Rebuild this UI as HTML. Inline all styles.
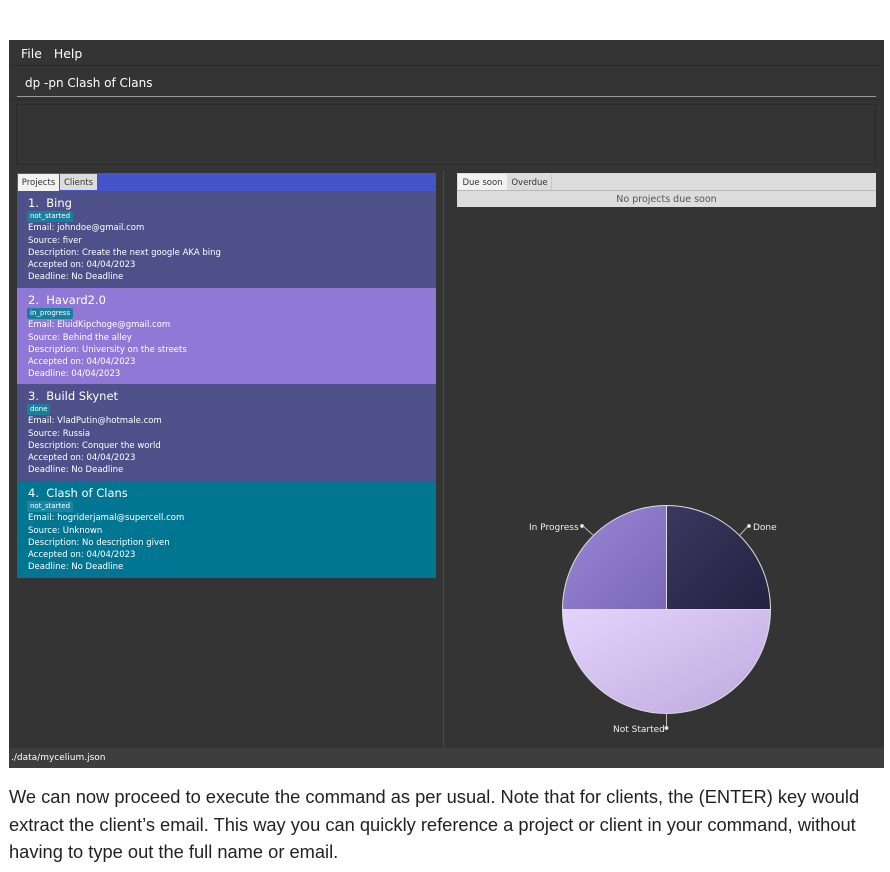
<!DOCTYPE html>
<html><head><meta charset="utf-8"><style>
*{margin:0;padding:0;box-sizing:border-box}
body{width:890px;height:872px;background:#fff;position:relative;overflow:hidden;font-family:"DejaVu Sans","Liberation Sans",sans-serif}
.a{position:absolute}
.app{left:9px;top:40px;width:875px;height:728px;background:#343434}
.card{position:absolute;left:17px;width:419px;color:#fff;font-size:8.5px;line-height:12.3px;padding:5px 0 0 11px}
.card .t{font-size:11.5px;line-height:14px}
.tag{display:inline-block;background:#1a7f9c;font-size:7px;line-height:11px;padding:0 3px;border-radius:2px;margin:1px 0 0 -1px}
p.txt{position:absolute;left:9px;top:783px;width:872px;font-family:"Liberation Sans",sans-serif;font-size:18.3px;line-height:27.5px;color:#222}
</style></head><body>
<div class="a app"></div>
<div class="a" style="left:9px;top:65px;width:875px;height:1px;background:#2a2a2a"></div>
<div class="a" style="left:21px;top:46px;color:#fff;font-size:12.5px">File&nbsp;&nbsp;&nbsp;Help</div>
<div class="a" style="left:25px;top:76px;color:#fff;font-size:12px">dp -pn Clash of Clans</div>
<div class="a" style="left:17px;top:96px;width:859px;height:1px;background:#9a9a9a"></div>
<div class="a" style="left:9px;top:99px;width:875px;height:1px;background:#2a2a2a"></div>
<div class="a" style="left:16px;top:104px;width:860px;height:61px;border:1px solid #2a2a2a;background:#343434"></div>
<div class="a" style="left:443px;top:170px;width:1px;height:578px;background:#4a4a4a"></div>
<div class="a" style="left:17px;top:173px;width:419px;height:18px;background:#4355c9"></div>
<div class="a" style="left:18px;top:174px;width:41px;height:17px;background:#f2f2f2;font-size:8.5px;line-height:18px;text-align:center;color:#333">Projects</div>
<div class="a" style="left:60px;top:174px;width:37px;height:16px;background:#dcdcdc;font-size:8.5px;line-height:18px;text-align:center;color:#333">Clients</div>
<div class="card" style="top:191px;height:97px;background:#4e5089"><div class="t">1.&nbsp; Bing</div><span class="tag">not_started</span><br>Email: johndoe@gmail.com<br>Source: fiver<br>Description: Create the next google AKA bing<br>Accepted on: 04/04/2023<br>Deadline: No Deadline</div>
<div class="card" style="top:288px;height:96px;background:#9079d6"><div class="t">2.&nbsp; Havard2.0</div><span class="tag">in_progress</span><br>Email: EluidKipchoge@gmail.com<br>Source: Behind the alley<br>Description: University on the streets<br>Accepted on: 04/04/2023<br>Deadline: 04/04/2023</div>
<div class="card" style="top:384px;height:97px;background:#4e5089"><div class="t">3.&nbsp; Build Skynet</div><span class="tag">done</span><br>Email: VladPutin@hotmale.com<br>Source: Russia<br>Description: Conquer the world<br>Accepted on: 04/04/2023<br>Deadline: No Deadline</div>
<div class="card" style="top:481px;height:97px;background:#007692"><div class="t">4.&nbsp; Clash of Clans</div><span class="tag" style="background:#1a86a0">not_started</span><br>Email: hogriderjamal@supercell.com<br>Source: Unknown<br>Description: No description given<br>Accepted on: 04/04/2023<br>Deadline: No Deadline</div>
<div class="a" style="left:457px;top:173px;width:419px;height:34px;background:#dcdcdc"></div>
<div class="a" style="left:458px;top:174px;width:49px;height:17px;background:#f2f2f2;font-size:8.5px;line-height:18px;text-align:center;color:#333">Due soon</div>
<div class="a" style="left:508px;top:174px;width:44px;height:17px;font-size:8.5px;line-height:18px;text-align:center;color:#333;border-right:1px solid #c8c8c8">Overdue</div>
<div class="a" style="left:457px;top:190px;width:419px;height:1px;background:#b8b8b8"></div>
<div class="a" style="left:457px;top:191px;width:419px;height:16px;font-size:9.5px;line-height:17px;text-align:center;color:#555">No projects due soon</div>
<svg class="a" style="left:440px;top:490px" width="450" height="260">
<defs>
<linearGradient id="g1" x1="0" y1="0" x2="1" y2="1"><stop offset="0" stop-color="#3a3860"/><stop offset="1" stop-color="#232240"/></linearGradient>
<linearGradient id="g2" x1="0" y1="0" x2="1" y2="1"><stop offset="0" stop-color="#9a88d6"/><stop offset="1" stop-color="#7a68b8"/></linearGradient>
<linearGradient id="g3" x1="0" y1="0" x2="1" y2="1"><stop offset="0" stop-color="#e4d4fc"/><stop offset="1" stop-color="#bfa8de"/></linearGradient>
</defs>
<g stroke="#ddd" stroke-width="1">
<path d="M226.5 119.5 L226.5 15.5 A104 104 0 0 1 330.5 119.5 Z" fill="url(#g1)"/>
<path d="M226.5 119.5 L122.5 119.5 A104 104 0 0 1 226.5 15.5 Z" fill="url(#g2)"/>
<path d="M226.5 119.5 L330.5 119.5 A104 104 0 0 1 122.5 119.5 Z" fill="url(#g3)"/>
</g>
<g stroke="#bbb" fill="#fff">
<line x1="300" y1="45" x2="309" y2="35"/><circle cx="309" cy="36" r="1.6"/>
<line x1="153" y1="45" x2="143" y2="36"/><circle cx="142" cy="36" r="1.6"/>
<line x1="226.5" y1="223" x2="226.5" y2="238"/><circle cx="226.5" cy="238" r="1.6"/>
</g>
<g fill="#eee" font-size="9" font-family="DejaVu Sans,sans-serif">
<text x="313" y="40">Done</text>
<text x="89" y="40">In Progress</text>
<text x="173" y="242">Not Started</text>
</g>
</svg>
<div class="a" style="left:9px;top:748px;width:875px;height:20px;background:#3e3e3e;color:#fff;font-size:9px;line-height:21px;padding-left:2px">./data/mycelium.json</div>
<p class="txt">We can now proceed to execute the command as per usual. Note that for clients, the (ENTER) key would extract the client’s email. This way you can quickly reference a project or client in your command, without having to type out the full name or email.</p>
</body></html>
